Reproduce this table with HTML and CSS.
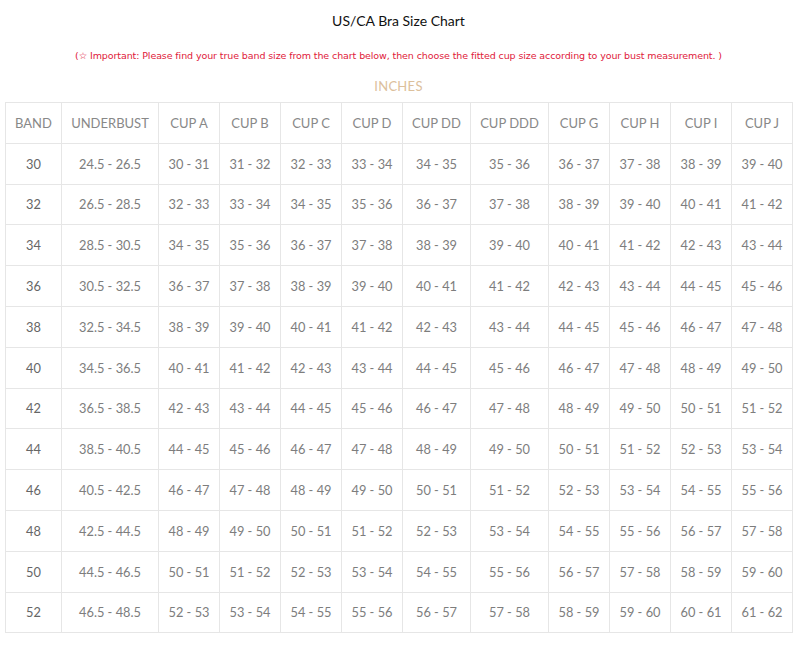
FILE: index.html
```html
<!DOCTYPE html>
<html>
<head>
<meta charset="utf-8">
<link rel="stylesheet" href="styles.css">
</head>
<body>
<div class="page">
  <h1 class="title">US/CA Bra Size Chart</h1>
  <p class="note">(☆ Important: Please find your true band size from the chart below, then choose the fitted cup size according to your bust measurement. )</p>
  <h2 class="unit">INCHES</h2>
  <table class="chart">
    <colgroup>
      <col class="c-band"><col class="c-under"><col class="c-cup"><col class="c-cup"><col class="c-cup"><col class="c-cup"><col class="c-dd"><col class="c-ddd"><col class="c-cup"><col class="c-cup"><col class="c-cup"><col class="c-cup">
    </colgroup>
    <thead>
      <tr><th>BAND</th><th>UNDERBUST</th><th>CUP A</th><th>CUP B</th><th>CUP C</th><th>CUP D</th><th>CUP DD</th><th>CUP DDD</th><th>CUP G</th><th>CUP H</th><th>CUP I</th><th>CUP J</th></tr>
    </thead>
    <tbody>
      <tr><td class="band">30</td><td>24.5 - 26.5</td><td>30 - 31</td><td>31 - 32</td><td>32 - 33</td><td>33 - 34</td><td>34 - 35</td><td>35 - 36</td><td>36 - 37</td><td>37 - 38</td><td>38 - 39</td><td>39 - 40</td></tr>
      <tr><td class="band">32</td><td>26.5 - 28.5</td><td>32 - 33</td><td>33 - 34</td><td>34 - 35</td><td>35 - 36</td><td>36 - 37</td><td>37 - 38</td><td>38 - 39</td><td>39 - 40</td><td>40 - 41</td><td>41 - 42</td></tr>
      <tr><td class="band">34</td><td>28.5 - 30.5</td><td>34 - 35</td><td>35 - 36</td><td>36 - 37</td><td>37 - 38</td><td>38 - 39</td><td>39 - 40</td><td>40 - 41</td><td>41 - 42</td><td>42 - 43</td><td>43 - 44</td></tr>
      <tr><td class="band">36</td><td>30.5 - 32.5</td><td>36 - 37</td><td>37 - 38</td><td>38 - 39</td><td>39 - 40</td><td>40 - 41</td><td>41 - 42</td><td>42 - 43</td><td>43 - 44</td><td>44 - 45</td><td>45 - 46</td></tr>
      <tr><td class="band">38</td><td>32.5 - 34.5</td><td>38 - 39</td><td>39 - 40</td><td>40 - 41</td><td>41 - 42</td><td>42 - 43</td><td>43 - 44</td><td>44 - 45</td><td>45 - 46</td><td>46 - 47</td><td>47 - 48</td></tr>
      <tr><td class="band">40</td><td>34.5 - 36.5</td><td>40 - 41</td><td>41 - 42</td><td>42 - 43</td><td>43 - 44</td><td>44 - 45</td><td>45 - 46</td><td>46 - 47</td><td>47 - 48</td><td>48 - 49</td><td>49 - 50</td></tr>
      <tr><td class="band">42</td><td>36.5 - 38.5</td><td>42 - 43</td><td>43 - 44</td><td>44 - 45</td><td>45 - 46</td><td>46 - 47</td><td>47 - 48</td><td>48 - 49</td><td>49 - 50</td><td>50 - 51</td><td>51 - 52</td></tr>
      <tr><td class="band">44</td><td>38.5 - 40.5</td><td>44 - 45</td><td>45 - 46</td><td>46 - 47</td><td>47 - 48</td><td>48 - 49</td><td>49 - 50</td><td>50 - 51</td><td>51 - 52</td><td>52 - 53</td><td>53 - 54</td></tr>
      <tr><td class="band">46</td><td>40.5 - 42.5</td><td>46 - 47</td><td>47 - 48</td><td>48 - 49</td><td>49 - 50</td><td>50 - 51</td><td>51 - 52</td><td>52 - 53</td><td>53 - 54</td><td>54 - 55</td><td>55 - 56</td></tr>
      <tr><td class="band">48</td><td>42.5 - 44.5</td><td>48 - 49</td><td>49 - 50</td><td>50 - 51</td><td>51 - 52</td><td>52 - 53</td><td>53 - 54</td><td>54 - 55</td><td>55 - 56</td><td>56 - 57</td><td>57 - 58</td></tr>
      <tr><td class="band">50</td><td>44.5 - 46.5</td><td>50 - 51</td><td>51 - 52</td><td>52 - 53</td><td>53 - 54</td><td>54 - 55</td><td>55 - 56</td><td>56 - 57</td><td>57 - 58</td><td>58 - 59</td><td>59 - 60</td></tr>
      <tr><td class="band">52</td><td>46.5 - 48.5</td><td>52 - 53</td><td>53 - 54</td><td>54 - 55</td><td>55 - 56</td><td>56 - 57</td><td>57 - 58</td><td>58 - 59</td><td>59 - 60</td><td>60 - 61</td><td>61 - 62</td></tr>
    </tbody>
  </table>
</div>
</body>
</html>
```
FILE: styles.css
```css
html, body {
  margin: 0;
  padding: 0;
  background: #fff;
}
.page {
  width: 800px;
  padding: 0 8px 0 5px;
  box-sizing: border-box;
  font-family: Lato, "Liberation Sans", sans-serif;
}
.title {
  margin: 0;
  padding-top: 11px;
  height: 20px;
  line-height: 20px;
  font-size: 14px;
  font-weight: 400;
  color: #111;
  text-align: center;
}
.note {
  margin: 0;
  padding-top: 16px;
  height: 18px;
  line-height: 18px;
  font-family: "DejaVu Sans", sans-serif;
  font-size: 9.5px;
  color: #e0203a;
  text-align: center;
  letter-spacing: -0.1px;
}
.unit {
  margin: 0;
  padding-top: 11px;
  height: 20px;
  line-height: 20px;
  font-size: 13px;
  font-weight: 400;
  letter-spacing: 0.3px;
  color: #dcc09c;
  text-align: center;
}
.chart {
  margin-top: 6px;
  width: 787px;
  border-collapse: collapse;
  table-layout: fixed;
  border: 1px solid #e3e3e3;
}
.c-band { width: 56px; }
.c-under { width: 97px; }
.c-cup { width: 61px; }
.c-dd { width: 68px; }
.c-ddd { width: 78px; }
.chart th, .chart td {
  border: 1px solid #e6e6e6;
  height: 39.8px;
  padding: 0;
  text-align: center;
  font-size: 12.8px;
  color: #7d7d7d;
  white-space: nowrap;
}
.chart th {
  font-weight: 400;
  color: #888;
  font-size: 13px;
}
.chart td.band {
  color: #666;
  font-weight: 400;
}
```
